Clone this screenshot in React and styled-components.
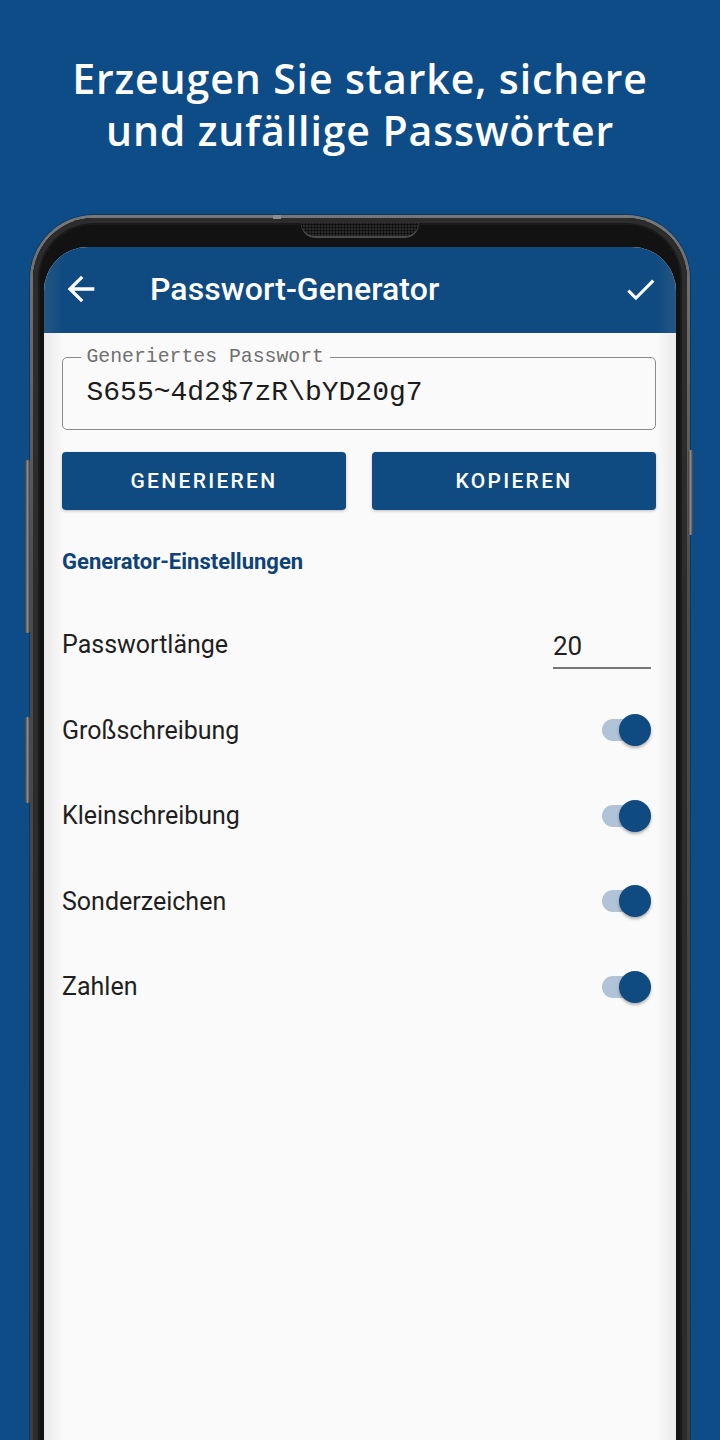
import React, { useState } from 'react';
import styled, { createGlobalStyle } from 'styled-components';

const GlobalStyle = createGlobalStyle`
    html, body {
        margin: 0;
        padding: 0;
        background: #0e4c88;
    }
    * {
        box-sizing: border-box;
    }
`

const Page = styled.div`
    width: 720px;
    height: 1440px;
    overflow: hidden;
    background: #0e4c88;
    font-family: Roboto, "Noto Sans", sans-serif;
`

const Headline = styled.h1`
    margin: 0;
    padding-top: 52px;
    text-align: center;
    color: #ffffff;
    font-family: "Open Sans", "Noto Sans", sans-serif;
    font-weight: 600;
    font-size: 41px;
    line-height: 52px;
    letter-spacing: 0.9px;
`

const Frame = styled.div`
    position: relative;
    margin: 59px 30px 0;
    height: 1260px;
    padding: 3px 3px 0;
    border-radius: 64px 64px 0 0;
    background: linear-gradient(180deg, #777 0%, #4a4a4a 30%, #3c3c3c 100%);
    box-shadow: 0 0 0 1px rgba(0, 0, 0, 0.25);
`

const Bezel = styled.div`
    height: 100%;
    padding: 29px 11px 0;
    border-radius: 61px 61px 0 0;
    background: #121212;
    box-shadow: inset 0 0 0 5px #2c2c2c, inset 0 0 0 7px #1a1a1a;
`

const Notch = styled.div`
    position: absolute;
    top: 8px;
    left: 50%;
    transform: translateX(-50%);
    width: 118px;
    height: 15px;
    border-radius: 0 0 14px 14px;
    background-color: #2a2a2a;
    background-image: radial-gradient(circle, #0c0c0c 0.9px, transparent 1.2px);
    background-size: 3px 3px;
    box-shadow: inset 0 -2px 0 #4a4a4a;
`

const Seam = styled.div`
    position: absolute;
    top: 0;
    left: 243px;
    width: 8px;
    height: 4px;
    background: #8c8c8c;
`

const SideButton = styled.div`
    position: absolute;
    top: ${p => p.top}px;
    height: ${p => p.h}px;
    width: 5px;
    ${p => p.right ? 'right: -3px;' : 'left: -5px;'}
    border-radius: 2px;
    background: linear-gradient(90deg, #3a3a3a, #8a8a8a, #3a3a3a);
`

const Screen = styled.div`
    position: relative;
    height: 100%;
    border-radius: 44px 44px 0 0;
    overflow: hidden;
    background: #fafafa;

    &::after {
        content: '';
        position: absolute;
        inset: 0;
        pointer-events: none;
        background:
            linear-gradient(90deg, rgba(150, 150, 150, 0.16) 0, rgba(150, 150, 150, 0) 20px),
            linear-gradient(270deg, rgba(150, 150, 150, 0.16) 0, rgba(150, 150, 150, 0) 20px);
    }
`

const AppBar = styled.div`
    height: 86px;
    display: flex;
    align-items: center;
    background: #0f4a80;
    color: #ffffff;
    padding: 0 16px 0 17px;
`

const IconButton = styled.div`
    width: 40px;
    height: 40px;
    display: flex;
    align-items: center;
    justify-content: center;
    margin-top: -2px;
`

const BarTitle = styled.div`
    flex: 1;
    margin-left: 49px;
    margin-top: -2px;
    font-size: 32px;
    font-weight: 500;
    letter-spacing: 0.1px;
`

const Content = styled.div`
    padding: 14px 20px 0 18px;
`

const Field = styled.fieldset`
    margin: 0;
    height: 83px;
    padding: 0 0 0 23.5px;
    border: 1.5px solid #8c8c8c;
    border-radius: 5px;
`

const Legend = styled.legend`
    margin-left: -6px;
    padding: 0 6px;
    font-family: "Liberation Mono", "DejaVu Sans Mono", monospace;
    font-size: 19.8px;
    line-height: 20px;
    color: #707070;
`

const PasswordText = styled.div`
    margin-top: 9px;
    font-family: "Liberation Mono", "DejaVu Sans Mono", monospace;
    font-size: 28px;
    line-height: 34px;
    color: #1c1c1c;
`

const ButtonRow = styled.div`
    display: grid;
    grid-template-columns: 1fr 1fr;
    gap: 26px;
    margin-top: 22px;
`

const ActionButton = styled.button`
    height: 58px;
    border: none;
    border-radius: 4px;
    background: #0f4a80;
    color: #ffffff;
    font-family: Roboto, sans-serif;
    font-size: 21px;
    font-weight: 500;
    letter-spacing: 2.3px;
    box-shadow: 0 1px 3px rgba(0, 0, 0, 0.25);
`

const SectionTitle = styled.div`
    margin-top: 40px;
    margin-bottom: 28px;
    font-size: 22px;
    line-height: 24px;
    font-weight: 700;
    color: #0e4279;
`

const Row = styled.div`
    height: 85.5px;
    display: flex;
    align-items: center;
    justify-content: space-between;
`

const RowLabel = styled.div`
    font-size: 25px;
    color: #1f1f1f;
`

const LengthInput = styled.div`
    width: 98px;
    margin-right: 5px;
    margin-top: 10px;
    padding-bottom: 6px;
    border-bottom: 2px solid #777;
    font-size: 26px;
    color: #1f1f1f;
`

const SwitchTrack = styled.div`
    position: relative;
    width: 44px;
    height: 22px;
    margin-right: 10px;
    border-radius: 11px;
    background: ${p => p.on ? '#b1c3d7' : '#c4c4c4'};
`

const SwitchThumb = styled.div`
    position: absolute;
    top: -5px;
    ${p => p.on ? 'right: -5px;' : 'left: -5px;'}
    width: 32px;
    height: 32px;
    border-radius: 50%;
    background: ${p => p.on ? '#0f4a80' : '#f1f1f1'};
    box-shadow: 0 2px 3px rgba(0, 0, 0, 0.3);
`

function ArrowBack()
{
    return (
        <svg width="40" height="40" viewBox="0 0 24 24" fill="#ffffff">
            <path d="M20 11H7.83l5.59-5.59L12 4l-8 8 8 8 1.41-1.41L7.83 13H20v-2z" />
        </svg>
    )
}

function CheckIcon()
{
    return (
        <svg width="37" height="37" viewBox="0 0 24 24" fill="#ffffff">
            <path d="M9 16.17L4.83 12l-1.42 1.41L9 19 21 7l-1.41-1.41z" />
        </svg>
    )
}

function Switch({ on })
{
    return (
        <SwitchTrack on={on}>
            <SwitchThumb on={on} />
        </SwitchTrack>
    )
}

export default function App()
{
    const [ settings ] = useState([
        { label: 'Großschreibung', on: true },
        { label: 'Kleinschreibung', on: true },
        { label: 'Sonderzeichen', on: true },
        { label: 'Zahlen', on: true },
    ]);

    return (
        <Page>
            <GlobalStyle />
            <Headline>
                Erzeugen Sie starke, sichere<br />
                und zufällige Passwörter
            </Headline>
            <Frame>
                <Seam />
                <SideButton top={245} h={173} />
                <SideButton top={502} h={86} />
                <SideButton right top={235} h={85} />
                <Notch />
                <Bezel>
                    <Screen>
                        <AppBar>
                            <IconButton><ArrowBack /></IconButton>
                            <BarTitle>Passwort-Generator</BarTitle>
                            <IconButton><CheckIcon /></IconButton>
                        </AppBar>
                        <Content>
                            <Field>
                                <Legend>Generiertes Passwort</Legend>
                                <PasswordText>S655~4d2$7zR\bYD20g7</PasswordText>
                            </Field>
                            <ButtonRow>
                                <ActionButton>GENERIEREN</ActionButton>
                                <ActionButton>KOPIEREN</ActionButton>
                            </ButtonRow>
                            <SectionTitle>Generator-Einstellungen</SectionTitle>
                            <Row>
                                <RowLabel>Passwortlänge</RowLabel>
                                <LengthInput>20</LengthInput>
                            </Row>
                            {settings.map(item => (
                                <Row key={item.label}>
                                    <RowLabel>{item.label}</RowLabel>
                                    <Switch on={item.on} />
                                </Row>
                            ))}
                        </Content>
                    </Screen>
                </Bezel>
            </Frame>
        </Page>
    )
}
